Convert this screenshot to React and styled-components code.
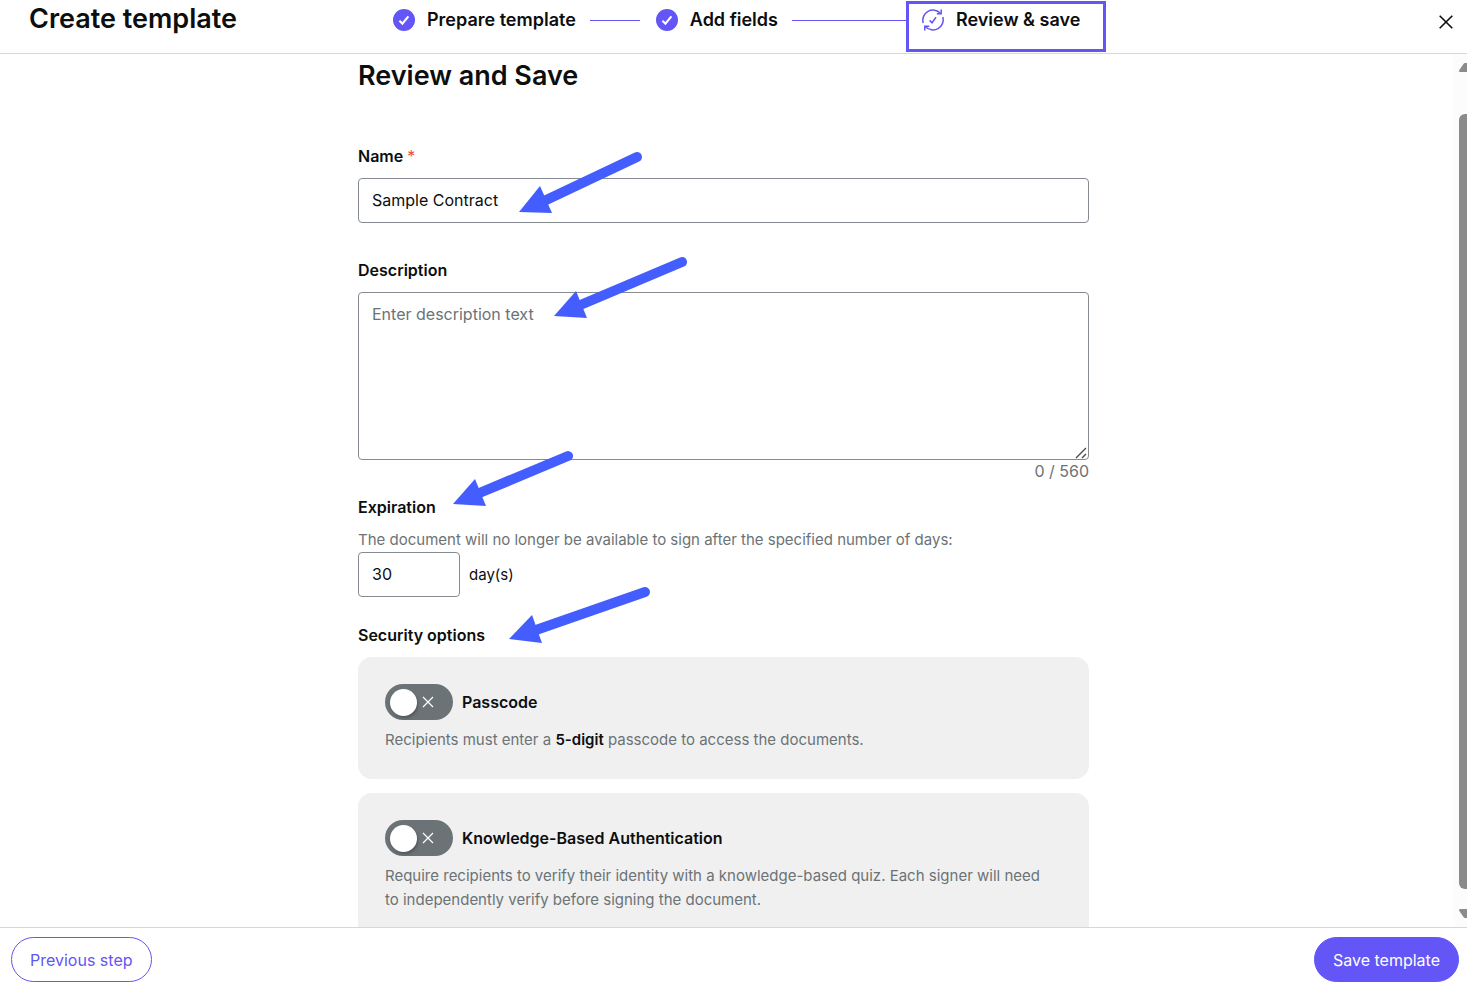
import React, { useState } from 'react';
import styled, { createGlobalStyle, ThemeProvider } from 'styled-components';

const MAX_DESCRIPTION = 560;

const theme = {
  colors: {
    primary: '#6355f6',
    arrow: '#435dff',
    text: '#0c0e0f',
    muted: '#6b7376',
    border: '#868b91',
    line: '#d6d8d8',
    card: '#f0f0f0',
    required: '#f0474a',
    white: '#ffffff',
  },
};

const ARROWS = [
  { head: '161,158 182,132 194,159', from: [279, 103], to: [184, 148] },
  { head: '196,262 218,237 229,264', from: [324, 208], to: [220, 252] },
  { head: '95,450 117,425 128,452', from: [210, 402], to: [119, 440] },
  { head: '151,585 174,561 184,589', from: [287, 538], to: [178, 576] },
];

const DoneIcon = () => (
  <StepIcon viewBox="0 0 22 22" aria-hidden="true">
    <circle cx="11" cy="11" r="11" fill="#6355f6" />
    <path d="M6.4 11.8 L9.4 14.6 L15.4 7.4" fill="none" stroke="#fff" strokeWidth="2.1" />
  </StepIcon>
);

const ReviewIcon = () => (
  <StepIcon viewBox="0 0 22 22" fill="none" stroke="#6355f6" strokeWidth="1.5" aria-hidden="true">
    <path d="M1.2 14 A10.2 10.2 0 0 1 18.4 4.2" />
    <path d="M19.2 0.6 V4.8 H14.8" />
    <path d="M20.8 8 A10.2 10.2 0 0 1 3.6 17.8" />
    <path d="M2.8 21.4 V17.2 H7.2" />
    <path d="M7.6 11.4 L10 13.8 L14 8.2" />
  </StepIcon>
);

const Toggle = ({ id, label }) => {
  const [on, setOn] = useState(false);

  return (
    <ToggleRow>
      <Switch $on={on}>
        <SwitchInput id={id} type="checkbox" role="switch" checked={on} onChange={() => setOn(!on)} />
        <Knob />
        <SwitchMark viewBox="0 0 12 12" aria-hidden="true">
          <path d={on ? 'M1 6 L5 10 L11 2' : 'M1 1 L11 11 M11 1 L1 11'} />
        </SwitchMark>
      </Switch>
      <ToggleLabel htmlFor={id}>{label}</ToggleLabel>
    </ToggleRow>
  );
};

const App = () => {
  const [name, setName] = useState('Sample Contract');
  const [description, setDescription] = useState('');
  const [days, setDays] = useState('30');

  return (
    <ThemeProvider theme={theme}>
      <GlobalStyle />
      <Page>
        <Header>
          <Title>Create template</Title>
          <Steps>
            <Step>
              <DoneIcon />
              Prepare template
            </Step>
            <Connector $width={50} />
            <Step>
              <DoneIcon />
              Add fields
            </Step>
            <Connector $width={114} />
            <Step $highlighted>
              <ReviewIcon />
              Review &amp; save
            </Step>
          </Steps>
          <CloseButton type="button" aria-label="Close">
            <svg width="14" height="14" viewBox="0 0 14 14" aria-hidden="true">
              <path d="M0.7 0.7 L13.3 13.3 M13.3 0.7 L0.7 13.3" stroke="#0c0e0f" strokeWidth="1.6" />
            </svg>
          </CloseButton>
        </Header>

        <Body>
          <ScrollArea>
            <Form>
              <Heading>Review and Save</Heading>

              <Label htmlFor="name">
                Name <Required>*</Required>
              </Label>
              <TextInput id="name" value={name} onChange={(e) => setName(e.target.value)} />

              <Label htmlFor="description" $top={35}>
                Description
              </Label>
              <AreaWrapper>
                <TextArea
                  id="description"
                  placeholder="Enter description text"
                  maxLength={MAX_DESCRIPTION}
                  value={description}
                  onChange={(e) => setDescription(e.target.value)}
                />
                <Grip viewBox="0 0 12 12" aria-hidden="true">
                  <path d="M1 11 L11 1 M7 11 L11 7" />
                </Grip>
              </AreaWrapper>
              <Counter>
                {description.length} / {MAX_DESCRIPTION}
              </Counter>

              <Label htmlFor="days" $top={13} $bottom={9}>
                Expiration
              </Label>
              <Text>The document will no longer be available to sign after the specified number of days:</Text>
              <DaysRow>
                <DaysInput id="days" inputMode="numeric" value={days} onChange={(e) => setDays(e.target.value)} />
                <DaysUnit>day(s)</DaysUnit>
              </DaysRow>

              <SectionTitle>Security options</SectionTitle>
              <Cards>
                <Card>
                  <Toggle id="passcode" label="Passcode" />
                  <Text>
                    Recipients must enter a <strong>5-digit</strong> passcode to access the documents.
                  </Text>
                </Card>
                <Card>
                  <Toggle id="kba" label="Knowledge-Based Authentication" />
                  <Text>
                    Require recipients to verify their identity with a knowledge-based quiz. Each signer will need to
                    independently verify before signing the document.
                  </Text>
                </Card>
              </Cards>

              <Arrows aria-hidden="true">
                {ARROWS.map(({ head, from, to }) => (
                  <g key={head}>
                    <line x1={from[0]} y1={from[1]} x2={to[0]} y2={to[1]} />
                    <polygon points={head} />
                  </g>
                ))}
              </Arrows>
            </Form>
          </ScrollArea>
          <ScrollTrack aria-hidden="true">
            <ScrollArrow viewBox="0 0 8 9">
              <path d="M0 7.5 L4.5 1 Q5 0 6 0 H8 V9 H1 Q0 9 0 7.5 Z" />
            </ScrollArrow>
            <ScrollThumb />
            <ScrollArrow viewBox="0 0 8 9">
              <path d="M0 1.5 L4.5 8 Q5 9 6 9 H8 V0 H1 Q0 0 0 1.5 Z" />
            </ScrollArrow>
          </ScrollTrack>
        </Body>

        <Footer>
          <Button type="button">Previous step</Button>
          <Button type="button" $primary>
            Save template
          </Button>
        </Footer>
      </Page>
    </ThemeProvider>
  );
};

export default App;

const GlobalStyle = createGlobalStyle`
  * {
    box-sizing: border-box;
  }

  body {
    margin: 0;
    background-color: #ffffff;
  }

  body, button, input, textarea {
    font-family: Inter, 'Liberation Sans', sans-serif;
    font-size: 16px;
    line-height: 24px;
  }
`;

const Page = styled.div`
  display: flex;
  flex-direction: column;
  height: 100vh;
  color: ${(props) => props.theme.colors.text};
`;

const Header = styled.header`
  display: flex;
  flex-shrink: 0;
  align-items: flex-start;
  height: 54px;
  padding: 0 14px 0 29px;
  border-bottom: 1px solid ${(props) => props.theme.colors.line};
`;

const Title = styled.h1`
  flex: 0 0 348px;
  margin: 0;
  font-size: 27px;
  font-weight: 600;
  line-height: 38px;
  white-space: nowrap;
`;

const Steps = styled.ol`
  display: flex;
  align-items: center;
  height: 40px;
  margin: 0;
  padding: 0;
  list-style: none;
`;

const Step = styled.li`
  position: relative;
  display: flex;
  align-items: center;
  gap: 12px;
  padding: 0 14px 0 16px;
  font-size: 18px;
  font-weight: 600;
  white-space: nowrap;

  &::after {
    content: '';
    display: ${(props) => (props.$highlighted ? 'block' : 'none')};
    position: absolute;
    inset: -7px -12px -20px 0;
    border: 3px solid ${(props) => props.theme.colors.primary};
  }
`;

const StepIcon = styled.svg`
  width: 22px;
  height: 22px;
  flex-shrink: 0;
`;

const Connector = styled.li`
  width: ${(props) => props.$width}px;
  height: 1px;
  background-color: ${(props) => props.theme.colors.primary};
`;

const CloseButton = styled.button`
  display: flex;
  margin: 15px 0 0 auto;
  padding: 0;
  border: none;
  background: none;
  cursor: pointer;
`;

const Body = styled.main`
  display: flex;
  flex: 1;
  min-height: 0;
`;

const ScrollArea = styled.div`
  flex: 1;
  padding: 0 7px 0 0;
  overflow-y: auto;
  scrollbar-width: none;
`;

const Form = styled.form`
  position: relative;
  display: flex;
  flex-direction: column;
  width: 100%;
  max-width: 731px;
  margin: 0 auto;
  padding: 6px 0 24px;
`;

const Heading = styled.h2`
  margin: 0 0 52px;
  font-size: 27px;
  font-weight: 600;
  line-height: 32px;
`;

const Label = styled.label`
  align-self: flex-start;
  margin: ${(props) => props.$top || 0}px 0 ${(props) => props.$bottom || 10}px;
  font-weight: 600;
`;

const Required = styled.span`
  color: ${(props) => props.theme.colors.required};
  font-weight: 400;
`;

const TextInput = styled.input`
  width: 100%;
  height: 45px;
  padding: 0 13px 2px;
  border: 1px solid ${(props) => props.theme.colors.border};
  border-radius: 4px;
  color: ${(props) => props.theme.colors.text};
`;

const AreaWrapper = styled.div`
  position: relative;
  display: flex;
`;

const TextArea = styled.textarea`
  width: 100%;
  height: 168px;
  padding: 9px 13px;
  border: 1px solid ${(props) => props.theme.colors.border};
  border-radius: 4px;
  color: ${(props) => props.theme.colors.text};
  resize: none;

  &::placeholder {
    color: ${(props) => props.theme.colors.muted};
  }
`;

const Grip = styled.svg`
  position: absolute;
  right: 2px;
  bottom: 1px;
  width: 12px;
  height: 12px;
  stroke: #4a4d50;
  stroke-width: 1.4;
`;

const Counter = styled.span`
  align-self: flex-end;
  color: ${(props) => props.theme.colors.muted};
  line-height: 22px;
`;

const Text = styled.p`
  margin: 0;
  color: ${(props) => props.theme.colors.muted};
  font-size: 15px;

  strong {
    color: ${(props) => props.theme.colors.text};
    font-weight: 600;
  }
`;

const DaysRow = styled.div`
  display: flex;
  align-items: center;
  gap: 9px;
`;

const DaysInput = styled(TextInput)`
  width: 102px;
`;

const DaysUnit = styled.span`
  font-size: 15px;
`;

const SectionTitle = styled.h3`
  margin: 26px 0 10px;
  font-size: 16px;
  font-weight: 600;
  line-height: 24px;
`;

const Cards = styled.div`
  display: flex;
  flex-direction: column;
  gap: 14px;
`;

const Card = styled.section`
  display: flex;
  flex-direction: column;
  gap: 8px;
  padding: 27px 32px 27px 27px;
  border-radius: 14px;
  background-color: ${(props) => props.theme.colors.card};
`;

const ToggleRow = styled.div`
  display: flex;
  align-items: center;
  gap: 9px;
`;

const Switch = styled.span`
  position: relative;
  display: flex;
  flex-direction: ${(props) => (props.$on ? 'row-reverse' : 'row')};
  align-items: center;
  gap: 5px;
  width: 68px;
  height: 36px;
  padding: 0 5px;
  border-radius: 18px;
  background-color: ${(props) => (props.$on ? props.theme.colors.primary : props.theme.colors.muted)};
`;

const SwitchInput = styled.input`
  position: absolute;
  inset: 0;
  width: 100%;
  height: 100%;
  margin: 0;
  opacity: 0;
  cursor: pointer;
`;

const Knob = styled.span`
  width: 27px;
  height: 27px;
  border-radius: 50%;
  background-color: ${(props) => props.theme.colors.white};
  box-shadow: 1px 2px 3px rgba(0, 0, 0, 0.25);
`;

const SwitchMark = styled.svg`
  width: 12px;
  height: 12px;
  fill: none;
  stroke: ${(props) => props.theme.colors.white};
  stroke-width: 1.2;
`;

const ToggleLabel = styled.label`
  font-weight: 600;
`;

const Arrows = styled.svg`
  position: absolute;
  top: 0;
  left: 0;
  width: 100%;
  height: 100%;
  fill: ${(props) => props.theme.colors.arrow};
  stroke-linecap: round;
  pointer-events: none;

  line {
    stroke: ${(props) => props.theme.colors.arrow};
    stroke-width: 10px;
  }
`;

const ScrollTrack = styled.div`
  display: flex;
  flex-direction: column;
  align-items: flex-end;
  width: 13px;
  padding: 9px 0;
  overflow: hidden;
  background-color: #fcfcfc;
`;

const ScrollArrow = styled.svg`
  width: 8px;
  height: 9px;
  flex-shrink: 0;
  fill: #8b8b8b;
`;

const ScrollThumb = styled.div`
  flex: 1;
  width: 8px;
  margin: 42px 0 20px;
  border-radius: 6px 0 0 6px;
  background-color: #8b8b8b;
`;

const Footer = styled.footer`
  display: flex;
  flex-shrink: 0;
  align-items: flex-start;
  justify-content: space-between;
  height: 62px;
  padding: 9px 8px 0 11px;
  border-top: 1px solid ${(props) => props.theme.colors.line};
`;

const Button = styled.button`
  height: 45px;
  padding: 0 18px;
  border: 1px solid ${(props) => props.theme.colors.primary};
  border-radius: 23px;
  background-color: ${(props) => (props.$primary ? props.theme.colors.primary : props.theme.colors.white)};
  color: ${(props) => (props.$primary ? props.theme.colors.white : props.theme.colors.primary)};
  cursor: pointer;
`;
